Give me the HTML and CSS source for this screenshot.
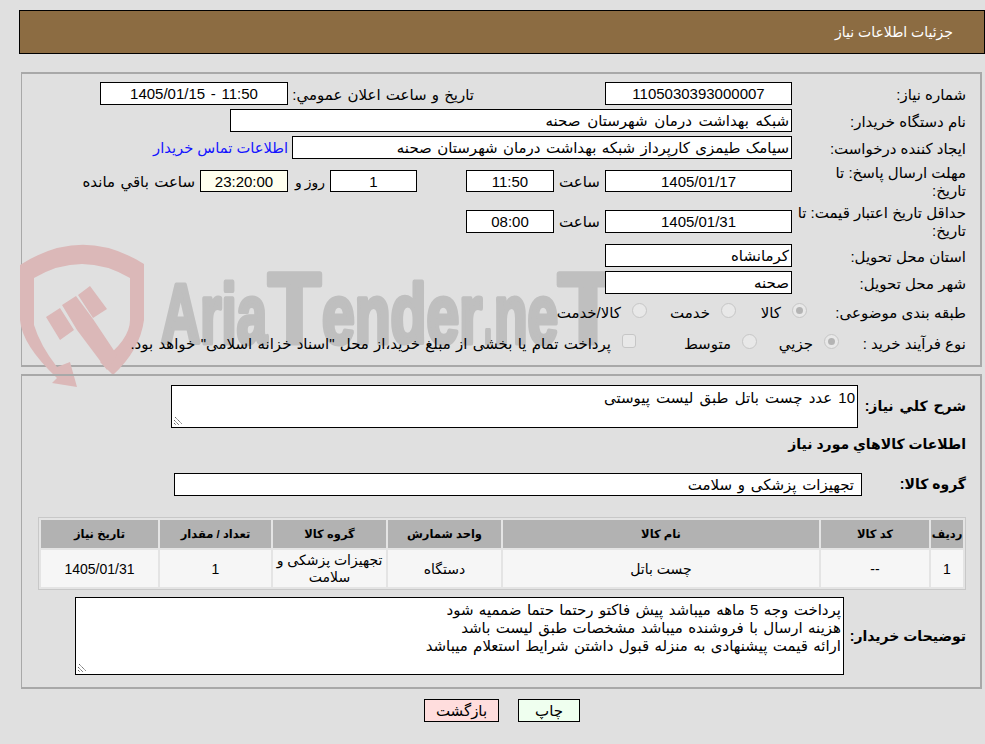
FILE: index.html
```html
<!DOCTYPE html>
<html lang="fa" dir="rtl">
<head>
<meta charset="utf-8">
<title>جزئیات اطلاعات نیاز</title>
<link rel="stylesheet" href="styles.css">
</head>
<body>
<header class="title-bar"><span>جزئیات اطلاعات نیاز</span></header>

<section class="panel top-panel">
  <svg class="watermark" viewBox="20 240 610 150" aria-hidden="true">
    <path class="wm-shield" d="M20 265Q82 225 144 264V320Q140 350 113 375L100 362Q130 340 130 320V278Q82 250 34 278V325Q40 345 57 367L70 362L77 387L52 383L57 378Q22 345 20 320Z"/>
    <path class="wm-shield" d="M46 317L60 308L74 330L60 340ZM62 305L76 296L93 319L117 355L107 370L77 330ZM78 295L90 286L107 309L93 318Z"/>
    <text class="wm-text" x="161" y="343" textLength="106" lengthAdjust="spacingAndGlyphs">Aria</text>
    <text class="wm-text wm-cap" x="268" y="343" textLength="53" lengthAdjust="spacingAndGlyphs">T</text>
    <text class="wm-text" x="322" y="343" textLength="160" lengthAdjust="spacingAndGlyphs">ender</text>
    <text class="wm-text" x="484" y="343" textLength="8" lengthAdjust="spacingAndGlyphs">.</text>
    <text class="wm-text" x="494" y="343" textLength="64" lengthAdjust="spacingAndGlyphs">ne</text>
    <text class="wm-text wm-cap" x="558" y="343" textLength="60" lengthAdjust="spacingAndGlyphs">T</text>
  </svg>
  <div class="row r1">
    <label class="lbl">شماره نیاز:</label>
    <div class="box w187 center">1105030393000007</div>
    <label class="announce">تاریخ و ساعت اعلان عمومي:</label>
    <div class="box w188 center" dir="ltr">1405/01/15 - 11:50</div>
  </div>
  <div class="row r2">
    <label class="lbl">نام دستگاه خریدار:</label>
    <div class="box w562">شبکه بهداشت درمان شهرستان صحنه</div>
  </div>
  <div class="row r3">
    <label class="lbl">ایجاد کننده درخواست:</label>
    <div class="box w500">سیامک طیمزی کارپرداز شبکه بهداشت درمان شهرستان صحنه</div>
    <a class="contact" href="#">اطلاعات تماس خریدار</a>
  </div>
  <div class="row r4">
    <label class="lbl two">مهلت ارسال پاسخ: تا<br>تاریخ:</label>
    <div class="box w187 center short">1405/01/17</div>
    <span class="hour">ساعت</span>
    <div class="box w88 center short">11:50</div>
    <div class="box w87 center short days">1</div>
    <span class="day-label">روز و</span>
    <div class="box w88 center short remain">23:20:00</div>
    <span class="remain-label">ساعت باقي مانده</span>
  </div>
  <div class="row r5">
    <label class="lbl two">حداقل تاریخ اعتبار قیمت: تا<br>تاریخ:</label>
    <div class="box w187 center">1405/01/31</div>
    <span class="hour">ساعت</span>
    <div class="box w88 center">08:00</div>
  </div>
  <div class="row r6">
    <label class="lbl">استان محل تحویل:</label>
    <div class="box w187">کرمانشاه</div>
  </div>
  <div class="row r7">
    <label class="lbl">شهر محل تحویل:</label>
    <div class="box w187">صحنه</div>
  </div>
  <div class="row r8">
    <label class="lbl">طبقه بندی موضوعی:</label>
    <span class="opt o1"><i class="radio on"></i>کالا</span>
    <span class="opt o2"><i class="radio"></i>خدمت</span>
    <span class="opt o3"><i class="radio"></i>کالا/خدمت</span>
  </div>
  <div class="row r9">
    <label class="lbl">نوع فرآیند خرید :</label>
    <span class="opt o4"><i class="radio on"></i>جزيي</span>
    <span class="opt o5"><i class="radio"></i>متوسط</span>
    <span class="opt o6"><i class="check"></i>پرداخت تمام یا بخشی از مبلغ خرید،از محل "اسناد خزانه اسلامی" خواهد بود.</span>
  </div>
</section>

<section class="panel bottom-panel">
  <div class="desc-row">
    <label class="blbl">شرح کلي نیاز:</label>
    <div class="area a1">10 عدد چست باتل طبق لیست پیوستی<svg class="grip" viewBox="0 0 10 10"><path d="M2 1L9 8M1 4L6 9M1 7L3 9"/></svg></div>
  </div>
  <h2 class="goods-title">اطلاعات کالاهاي مورد نیاز</h2>
  <div class="group-row">
    <label class="blbl">گروه کالا:</label>
    <div class="box group">تجهیزات پزشکی و سلامت</div>
  </div>
  <table class="items">
    <thead>
      <tr><th class="c1">ردیف</th><th class="c2">کد کالا</th><th class="c3">نام کالا</th><th class="c4">واحد شمارش</th><th class="c5">گروه کالا</th><th class="c6">تعداد / مقدار</th><th class="c7">تاریخ نیاز</th></tr>
    </thead>
    <tbody>
      <tr><td>1</td><td>--</td><td>چست باتل</td><td>دستگاه</td><td>تجهیزات پزشکی و سلامت</td><td>1</td><td>1405/01/31</td></tr>
    </tbody>
  </table>
  <div class="notes-row">
    <label class="blbl">توضیحات خریدار:</label>
    <div class="area a2">پرداخت وجه 5 ماهه میباشد پیش فاکتو رحتما حتما ضممیه شود<br>هزینه ارسال با فروشنده میباشد مشخصات طبق لیست باشد<br>ارائه قیمت پیشنهادی به منزله قبول داشتن شرایط استعلام میباشد<svg class="grip" viewBox="0 0 10 10"><path d="M2 1L9 8M1 4L6 9M1 7L3 9"/></svg></div>
  </div>
</section>

<div class="actions">
  <button class="btn print" type="button">چاپ</button>
  <button class="btn back" type="button">بازگشت</button>
</div>
</body>
</html>
```
FILE: styles.css
```css
* { box-sizing: border-box; }
html, body { height: 100%; }
body {
  margin: 0;
  padding: 10px 0 0;
  background: #e0e0e0;
  color: #000;
  font-family: "Liberation Sans", "DejaVu Sans", sans-serif;
  font-size: 15px;
  overflow: hidden;
}
.title-bar {
  margin: 0 0 0 19px;
  height: 44px;
  border: 1px solid #000;
  background: #8c6c42;
  color: #fff;
  display: flex;
  align-items: center;
  padding: 0 31px 0 0;
  font-size: 14px;
}
.panel {
  position: relative;
  margin: 18px 3px 0 21px;
  border-style: solid;
  border-width: 2px 2px 2px 1px;
  border-color: #a8a8a8;
}
.top-panel { height: 295px; padding-top: 8px; }
.bottom-panel { height: 315px; margin-top: 7px; padding-top: 9px; }
.watermark {
  position: absolute;
  left: -2px;
  top: 166px;
  width: 610px;
  height: 150px;
  overflow: visible;
  pointer-events: none;
  direction: ltr;
}
.wm-shield { fill: #dbb8b8; }
.wm-text {
  fill: #bfbfbf;
  stroke: #bfbfbf;
  stroke-width: 5px;
  stroke-linejoin: round;
  font-family: "Liberation Sans", sans-serif;
  font-weight: 700;
  font-size: 84px;
}
.wm-cap { font-size: 100px; }
.row { display: flex; align-items: flex-start; position: relative; }
.lbl {
  width: 188px;
  padding: 0 14px 0 4px;
  line-height: 25px;
  flex: none;
  white-space: nowrap;
}
.lbl.two { line-height: 18px; margin-top: -6px; }
.box {
  height: 23px;
  border: 1px solid #000;
  background: #fff;
  line-height: 21px;
  padding: 0 2px;
  flex: none;
  white-space: nowrap;
  overflow: hidden;
  word-spacing: 1.2px;
}
.center { text-align: center; }
.short { height: 22px; }
.w187 { width: 187px; }
.w188 { width: 188px; word-spacing: 1.5px; }
.w562 { width: 562px; word-spacing: 2.5px; }
.w500 { width: 500px; }
.w88 { width: 88px; }
.w87 { width: 87px; }
.r1, .r2, .r6, .r7 { height: 27px; }
.r3 { height: 34px; }
.r4 { height: 40px; }
.r5 { height: 34px; }
.r8 { height: 30px; align-items: center; }
.r9 { height: 32px; align-items: center; }
.r8 .lbl, .r9 .lbl { line-height: 20px; }
.announce { margin-right: 131px; width: 186px; line-height: 25px; white-space: nowrap; flex: none; word-spacing: 1px; }
.contact { color: #1414ff; text-decoration: none; line-height: 25px; margin-right: 4px; white-space: nowrap; font-size: 14.7px; }
.hour { width: 51px; text-align: center; flex: none; line-height: 24px; }
.days { margin-right: 49px; }
.day-label { margin-right: 5px; width: 37px; flex: none; white-space: nowrap; line-height: 24px; font-size: 14px; word-spacing: -1px; }
.remain { background: #ffffee; }
.remain-label { margin-right: 5px; white-space: nowrap; line-height: 24px; word-spacing: 1.2px; }
.opt { display: inline-flex; align-items: center; flex: none; white-space: nowrap; }
.radio {
  width: 15px;
  height: 15px;
  border-radius: 50%;
  border: 1px solid #c6c6c6;
  background: #e8e8e8;
  margin-left: 11px;
  flex: none;
  position: relative;
  top: -3px;
}
.radio.on::after {
  content: "";
  position: absolute;
  left: 3px;
  top: 3px;
  width: 7px;
  height: 7px;
  border-radius: 50%;
  background: #b4b4b4;
}
.check {
  width: 14px;
  height: 14px;
  border: 1px solid #c6c6c6;
  border-radius: 3px;
  background: #e8e8e8;
  margin-left: 11px;
  position: relative;
  top: -3px;
  flex: none;
}
.o1 { margin-right: -15px; width: 71px; }
.o2 { width: 89px; }
.o4 { margin-right: -47px; width: 82px; }
.o5 { width: 121px; }
.o6 { word-spacing: 1.1px; }
.blbl { font-weight: 700; font-size: 14px; flex: none; white-space: nowrap; padding-right: 14px; }
.desc-row { display: flex; }
.desc-row .blbl { width: 122px; line-height: 43px; word-spacing: 2px; }
.area {
  position: relative;
  border: 1px solid #000;
  background: #fff;
  flex: none;
  padding: 3px 2px;
  line-height: 18px;
  white-space: nowrap;
  overflow: hidden;
}
.a1 { width: 687px; height: 43px; word-spacing: 2px; }
.grip { position: absolute; left: 1px; bottom: 1px; width: 10px; height: 10px; }
.grip path { fill: none; stroke: #666; stroke-width: 1; stroke-dasharray: 1.5 .5; }
.goods-title { margin: 6px 14px 0 0; font-size: 14px; font-weight: 700; line-height: 20px; height: 20px; }
.group-row { display: flex; margin-top: 19px; }
.group-row .blbl { width: 118px; line-height: 23px; }
.group { width: 688px; padding-right: 7px; word-spacing: 1.5px; }
.items {
  margin: 21px 14px 0 0;
  width: 928px;
  border-collapse: separate;
  border-spacing: 2px;
  border: 1px solid #c8c8c8;
  background: #e4e4e4;
  table-layout: fixed;
}
.items th { background: #b2b2b2; height: 28px; padding: 0; font-size: 11.5px; font-weight: 700; }
.items td { background: #f6f6f6; height: 37px; padding: 1px 2px 0; text-align: center; line-height: 17px; font-size: 14px; }
.c1 { width: 32px; }
.c2 { width: 108px; }
.c3 { width: 316px; }
.c4 { width: 113px; }
.c5 { width: 113px; }
.c6 { width: 111px; }
.c7 { width: 117px; }
.notes-row { display: flex; margin-top: 7px; align-items: center; }
.notes-row .blbl { width: 136px; }
.a2 { width: 769px; height: 78px; word-spacing: 1.2px; }
.actions {
  display: flex;
  justify-content: center;
  gap: 19px;
  margin: 10px 0 0;
  padding-left: 19px;
}
.btn {
  height: 23px;
  border: 1px solid #000;
  font: 15px "Liberation Sans", "DejaVu Sans", sans-serif;
  color: #000;
  padding: 0;
}
.print { width: 62px; background: #efffef; }
.back { width: 75px; background: #ffdddd; }
```
